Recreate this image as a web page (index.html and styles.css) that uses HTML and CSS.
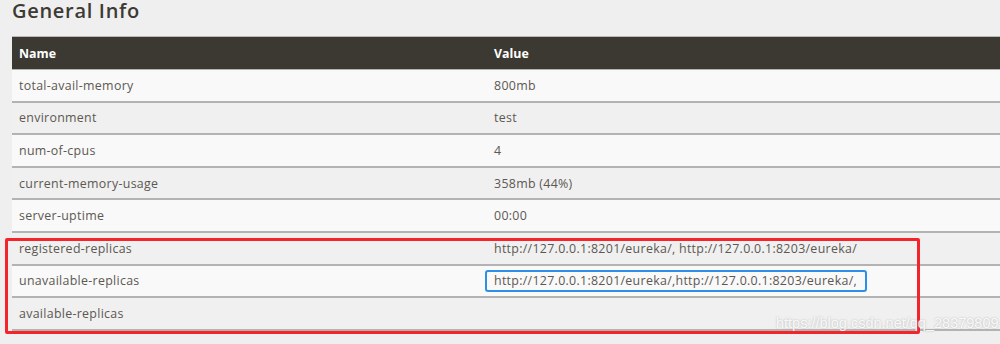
FILE: index.html
```html
<!DOCTYPE html>
<html lang="en">
<head>
<meta charset="utf-8">
<title>General Info</title>
<link rel="stylesheet" href="styles.css">
</head>
<body>
<div class="page">
  <h2 class="title">General Info</h2>
  <div class="info-table">
    <div class="row head"><div class="cell">Name</div><div class="cell">Value</div></div>
    <div class="row odd"><div class="cell">total-avail-memory</div><div class="cell">800mb</div></div>
    <div class="row even"><div class="cell">environment</div><div class="cell">test</div></div>
    <div class="row odd"><div class="cell">num-of-cpus</div><div class="cell">4</div></div>
    <div class="row even"><div class="cell">current-memory-usage</div><div class="cell">358mb (44%)</div></div>
    <div class="row odd"><div class="cell">server-uptime</div><div class="cell">00:00</div></div>
    <div class="row even"><div class="cell">registered-replicas</div><div class="cell">http://127.0.0.1:8201/eureka/, http://127.0.0.1:8203/eureka/</div></div>
    <div class="row odd"><div class="cell">unavailable-replicas</div><div class="cell"><span class="mark-blue">http://127.0.0.1:8201/eureka/,http://127.0.0.1:8203/eureka/,</span></div></div>
    <div class="row even"><div class="cell">available-replicas</div><div class="cell"></div></div>
  </div>
  <div class="mark-red"></div>
  <div class="watermark">https://blog.csdn.net/qq_28379809</div>
</div>
</body>
</html>
```

FILE: styles.css
```css
html, body {
  margin: 0;
  padding: 0;
  background: #efefef;
  overflow: hidden;
}

.page {
  position: relative;
  width: 1000px;
  height: 344px;
  overflow: hidden;
  font-family: "Open Sans", "Liberation Sans", sans-serif;
}

.title {
  margin: 0;
  padding: 0 0 0 12px;
  height: 36px;
  font-family: "Open Sans", sans-serif;
  font-weight: 600;
  font-size: 20px;
  line-height: 21px;
  letter-spacing: 0.7px;
  color: #3d3a35;
}

.info-table {
  margin-left: 12px;
  width: 1010px;
  border-top: 1px solid #b9b9b9;
}

.row {
  display: grid;
  grid-template-columns: 475px 1fr;
  height: 30.6px;
  border-bottom: 2px solid #b3b3b3;
  align-items: center;
  font-size: 12.4px;
  letter-spacing: 0.3px;
  color: #5c5852;
}

.row.head {
  height: 32px;
  border-bottom: 1px solid #b3b3b3;
  background: #3c3933;
  color: #ffffff;
  font-weight: 700;
  letter-spacing: 0;
}

.row.odd { background: #f9f9f9; }
.row.even { background: #f0f0f0; }

.cell {
  padding: 0 7px;
  white-space: nowrap;
}

.mark-blue {
  display: inline-block;
  margin-left: -9px;
  padding: 2px 8px 2px 7px;
  border: 2px solid #2f8fe8;
  border-radius: 3px;
  line-height: 14px;
}

.mark-red {
  position: absolute;
  left: 5px;
  top: 238px;
  width: 909px;
  height: 90px;
  border: 3px solid #f5242b;
  border-radius: 2px;
}

.watermark {
  position: absolute;
  left: 776px;
  top: 315px;
  font-family: "Liberation Sans", sans-serif;
  font-size: 14.5px;
  color: rgba(255, 255, 255, 0.9);
  text-shadow: 0 0 2px rgba(150, 150, 150, 0.7);
}
```
